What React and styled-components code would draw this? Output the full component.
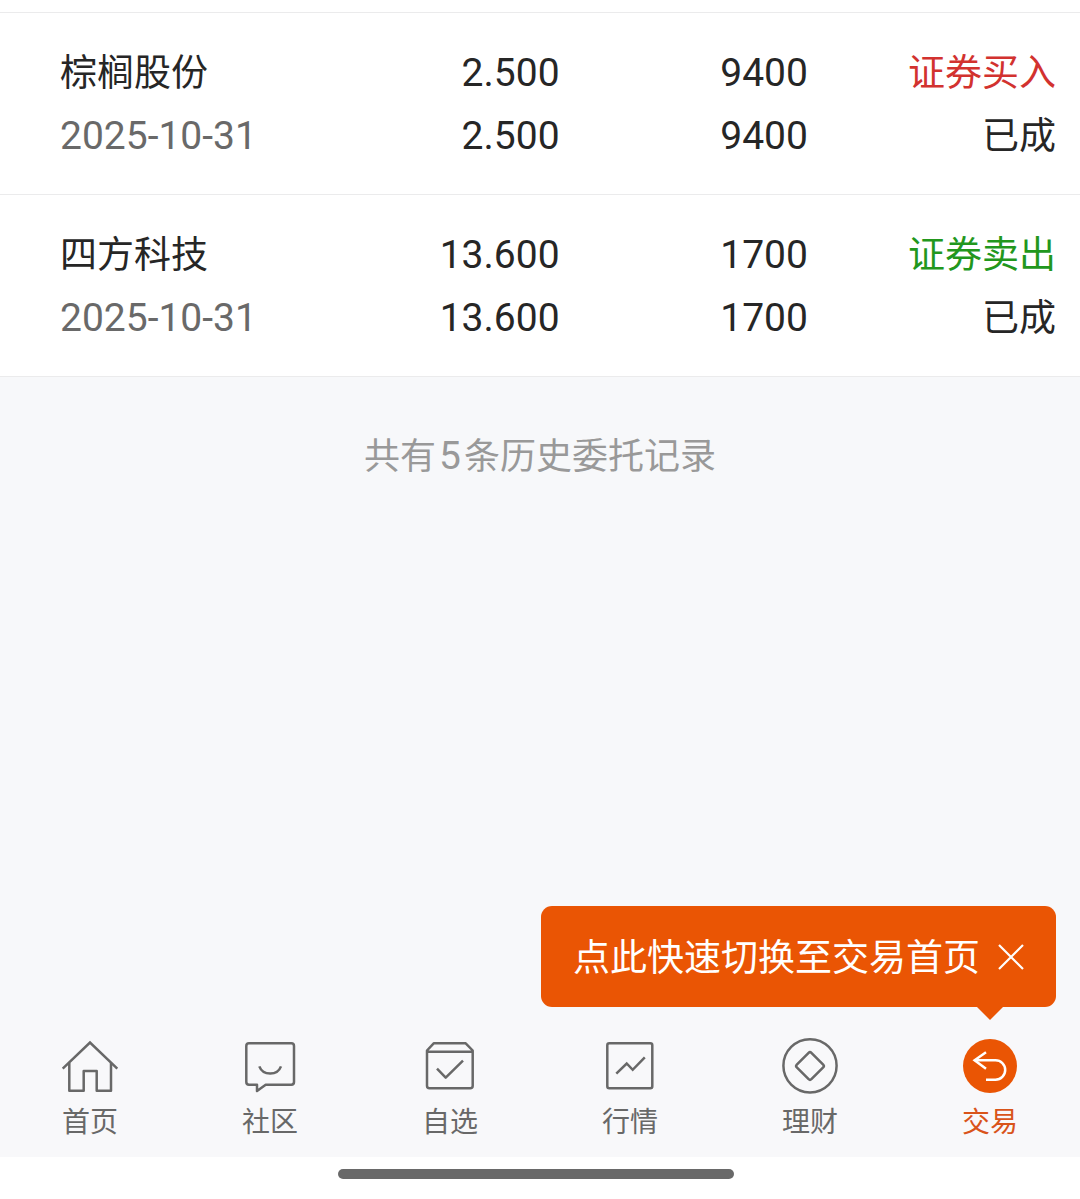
import React, { useState } from "react";
import styled, { createGlobalStyle } from "styled-components";

const GlobalStyle = createGlobalStyle`
  * { box-sizing: border-box; }
  body {
    margin: 0;
    background: #fff;
    color: #262626;
    font-family: "Noto Sans CJK SC", sans-serif;
  }
`;

const Page = styled.div`
  display: flex;
  flex-direction: column;
  min-height: 100vh;
`;

const Content = styled.main`
  flex: 1;
  background: #f7f8fa;
`;

const Orders = styled.section`
  padding-top: 12px;
  background: #fff;
`;

const OrderTable = styled.table`
  width: 100%;
  table-layout: fixed;
  border-collapse: separate;
  border-spacing: 0;
  border-top: 1px solid #ebebec;
`;

const Cell = styled.td`
  width: ${(p) => p.$width};
  padding: 27px 2px 28px 0;
  border-bottom: 1px solid #ebebec;
  text-align: right;
  white-space: nowrap;

  &:first-child { padding-left: 60px; text-align: left; }
  &:last-child { padding-right: 24px; }
`;

const Line = styled.div`
  height: 63px;
  padding-bottom: 2px;
  line-height: 61px;
  font-size: 37px;
  color: ${(p) => p.$color || "#262626"};
`;

const NumberLine = styled(Line)`
  padding: 4px 0 0;
  line-height: 59px;
  font-family: Roboto, "Noto Sans CJK SC", sans-serif;
  font-size: 39px;
`;

const Summary = styled.p`
  margin: 0;
  padding-top: 46px;
  text-align: center;
  font-size: 36px;
  line-height: 60px;
  color: #999;
`;

const Count = styled.span`
  padding: 0 3px;
  font-family: Roboto, sans-serif;
  font-size: 39px;
`;

const TabBar = styled.nav`
  position: relative;
  display: flex;
  padding: 16px 0 19px;
  background: #f8f8fa;
`;

const Tab = styled.a`
  flex: 1;
  display: flex;
  flex-direction: column;
  align-items: center;
  gap: 6px;
  font-size: 28px;
  line-height: 36px;
  text-decoration: none;
  color: ${(p) => (p.$active ? "#d9541a" : "#686868")};
`;

const TabIcon = styled.svg`
  width: 60px;
  height: 60px;
  fill: none;
  stroke: currentColor;
  stroke-width: 2.5;
  stroke-linejoin: round;
`;

const Tip = styled.div`
  position: absolute;
  right: 24px;
  bottom: 150px;
  display: flex;
  align-items: center;
  gap: 18px;
  padding: 32px;
  border-radius: 11px;
  background: #ea5504;
  color: #fff;
  font-size: 37px;
  white-space: nowrap;

  &::after {
    content: "";
    position: absolute;
    top: 100%;
    right: 53px;
    border: 13px solid transparent;
    border-top-color: #ea5504;
    border-bottom: 0;
  }
`;

const TipText = styled.span`
  padding-bottom: 2px;
  line-height: 35px;
`;

const CloseButton = styled.button`
  display: flex;
  padding: 0;
  border: 0;
  background: none;
  color: inherit;
  cursor: pointer;

  svg {
    width: 26px;
    height: 26px;
    fill: none;
    stroke: currentColor;
    stroke-width: 2.2;
  }
`;

const GestureArea = styled.footer`
  display: flex;
  justify-content: center;
  height: 42px;
  padding: 12px 8px 0 0;
  background: #fff;
`;

const GestureHandle = styled.div`
  width: 37%;
  height: 10px;
  border-radius: 5px;
  background: #696969;
`;

const orders = [
  { name: "棕榈股份", date: "2025-10-31", price: "2.500", amount: "9400", side: "证券买入", color: "#d2322f" },
  { name: "四方科技", date: "2025-10-31", price: "13.600", amount: "1700", side: "证券卖出", color: "#22971d" },
];

const tabs = [
  {
    label: "首页",
    icon: (
      <>
        <path d="M2.7 32.7 30 6.5 57.3 32.7" strokeLinejoin="miter" />
        <path d="M9.3 27V54.7H23.7V35H36.7V54.7H51V27" />
      </>
    ),
  },
  {
    label: "社区",
    icon: (
      <>
        <path d="M9 7.3H51.3Q54 7.3 54 10V46Q54 48.7 51.3 48.7H25.7L17 55V48.7H9Q6.3 48.7 6.3 46V10Q6.3 7.3 9 7.3Z" />
        <path d="M19.3 30.4C23 40 37.4 40 41 30.4" />
      </>
    ),
  },
  {
    label: "自选",
    icon: (
      <>
        <path d="M7 14.5 13.7 7.3H45.7L52.7 14.5V49.8Q52.7 52.3 50.2 52.3H9.5Q7 52.3 7 49.8ZM7 15.7H52.7" />
        <path d="M17 32.7 25.7 41.6 43 24.7" />
      </>
    ),
  },
  {
    label: "行情",
    icon: (
      <>
        <rect x="7.3" y="7.3" width="45" height="45" rx="2" />
        <path d="M16.3 37.7 26.7 27.5 32.7 33.8 44.8 21.4" strokeLinejoin="miter" />
      </>
    ),
  },
  {
    label: "理财",
    icon: (
      <>
        <circle cx="30" cy="29.8" r="26.6" />
        <path d="M28.6 16.8Q30 15.4 31.4 16.8L43.2 28.6Q44.6 30 43.2 31.4L31.4 43.2Q30 44.6 28.6 43.2L16.8 31.4Q15.4 30 16.8 28.6Z" />
      </>
    ),
  },
  {
    label: "交易",
    active: true,
    icon: (
      <>
        <circle cx="30" cy="30" r="27" fill="#ea5504" stroke="none" />
        <g stroke="#fff" strokeLinejoin="miter">
          <path d="M26 16.3 14.6 24.3 26 32.7" />
          <path d="M14.6 24.3H35.5A9.7 9.7 0 0 1 35.5 43.7H26" />
        </g>
      </>
    ),
  },
];

export default function App() {
  const [tipOpen, setTipOpen] = useState(true);

  return (
    <Page>
      <GlobalStyle />
      <Content>
        <Orders>
          <OrderTable>
            <tbody>
              {orders.map((o) => (
                <tr key={o.name}>
                  <Cell $width="28%">
                    <Line>{o.name}</Line>
                    <NumberLine $color="#696969">{o.date}</NumberLine>
                  </Cell>
                  <Cell $width="24%">
                    <NumberLine>{o.price}</NumberLine>
                    <NumberLine>{o.price}</NumberLine>
                  </Cell>
                  <Cell $width="23%">
                    <NumberLine>{o.amount}</NumberLine>
                    <NumberLine>{o.amount}</NumberLine>
                  </Cell>
                  <Cell $width="25%">
                    <Line $color={o.color}>{o.side}</Line>
                    <Line>已成</Line>
                  </Cell>
                </tr>
              ))}
            </tbody>
          </OrderTable>
        </Orders>
        <Summary>
          共有<Count>5</Count>条历史委托记录
        </Summary>
      </Content>
      <TabBar>
        {tipOpen && (
          <Tip>
            <TipText>点此快速切换至交易首页</TipText>
            <CloseButton type="button" aria-label="关闭" onClick={() => setTipOpen(false)}>
              <svg viewBox="0 0 26 26">
                <path d="M1 1 25 25M25 1 1 25" />
              </svg>
            </CloseButton>
          </Tip>
        )}
        {tabs.map((t) => (
          <Tab key={t.label} href="#" $active={t.active} aria-current={t.active ? "page" : undefined}>
            <TabIcon viewBox="0 0 60 60" aria-hidden="true">{t.icon}</TabIcon>
            {t.label}
          </Tab>
        ))}
      </TabBar>
      <GestureArea>
        <GestureHandle />
      </GestureArea>
    </Page>
  );
}
